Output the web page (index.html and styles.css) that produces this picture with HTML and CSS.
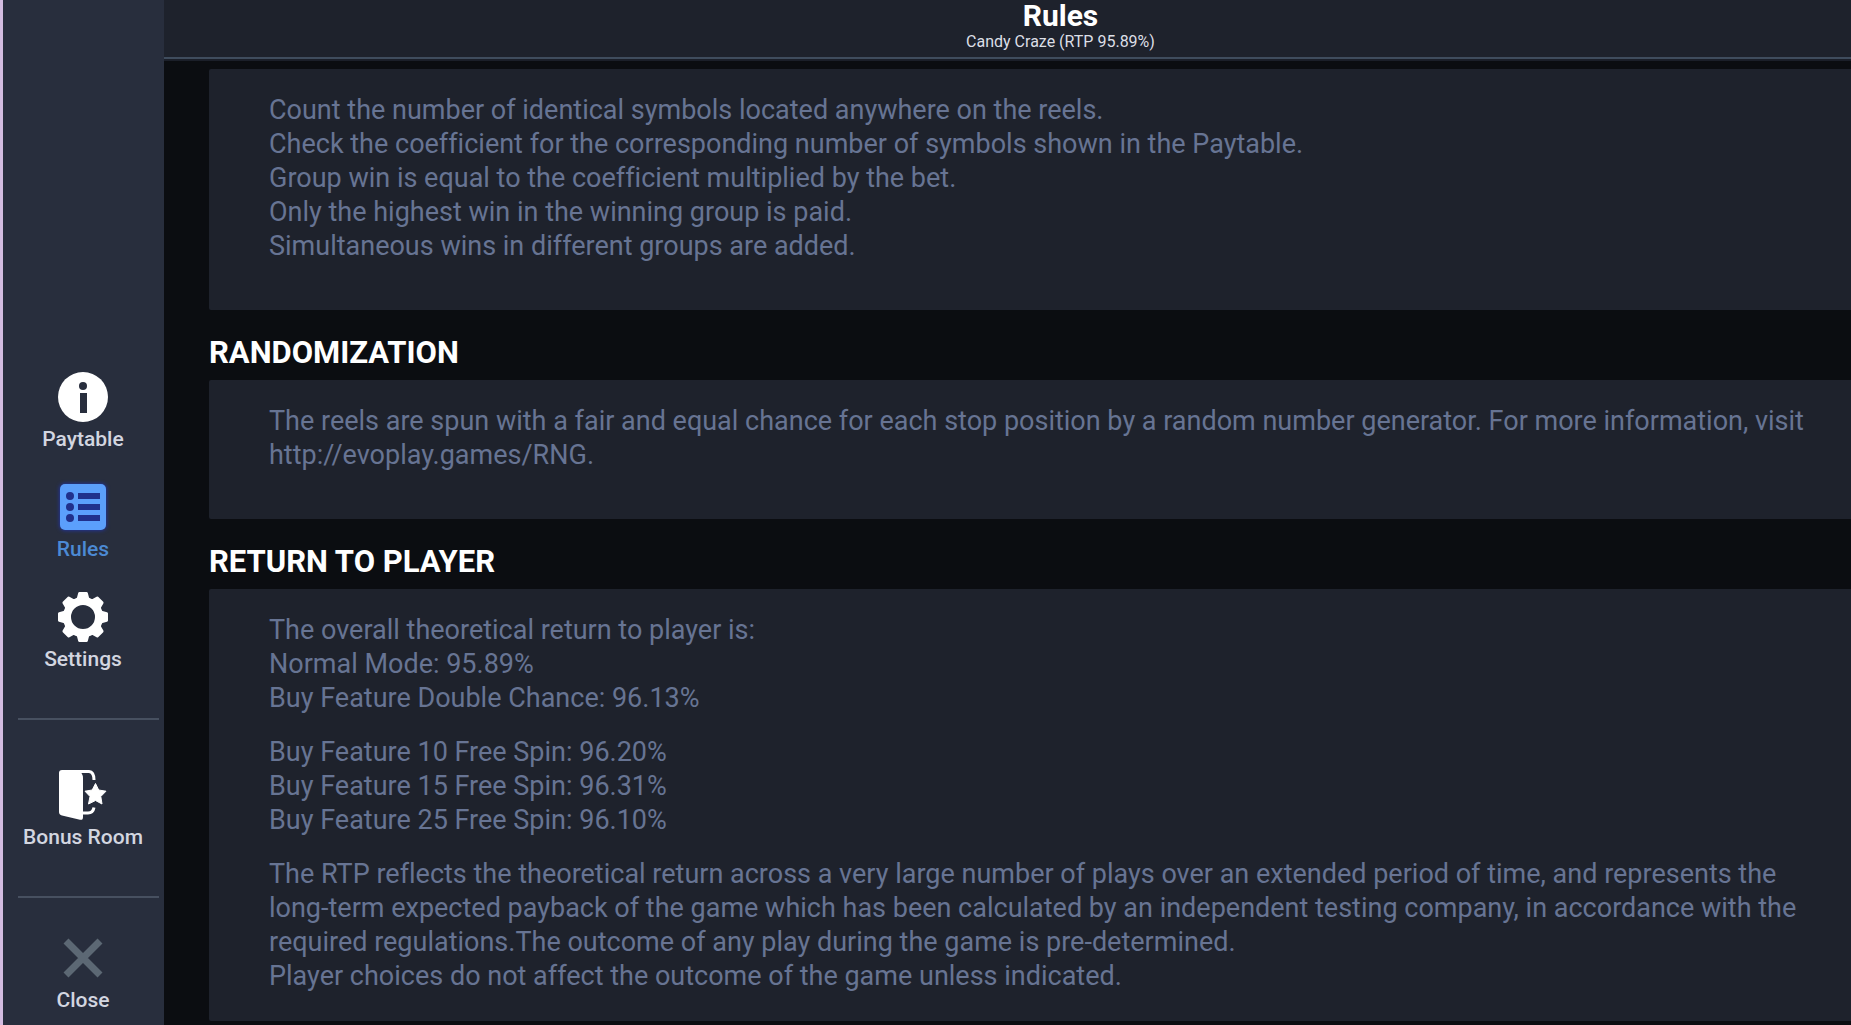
FILE: index.html
```
<!DOCTYPE html>
<html lang="en">
<head>
<meta charset="utf-8">
<meta name="viewport" content="width=device-width, initial-scale=1">
<title>Rules</title>
<link rel="stylesheet" href="styles.css">
</head>
<body>
<div class="app">
  <nav class="sidebar" aria-label="Game menu">
    <div class="menu">
      <button class="menu-item" type="button">
        <svg class="icon" viewBox="0 0 50 50" aria-hidden="true">
          <circle cx="25" cy="25" r="25" fill="#fff"/>
          <circle cx="25" cy="14" r="4" fill="#282e3d"/>
          <path d="M22 21h7v20h-7z" fill="#282e3d"/>
        </svg>
        <span>Paytable</span>
      </button>
      <button class="menu-item active" type="button" aria-current="page">
        <svg class="icon" viewBox="0 0 50 50" aria-hidden="true">
          <rect class="tile" x="2" y="2" width="46" height="46" rx="5" fill="#5b9ffc"/>
          <g fill="#20308c">
            <circle cx="12" cy="14" r="4"/><circle cx="12" cy="25" r="4"/><circle cx="12" cy="36" r="4"/>
            <path d="M20 11h22v6H20zM20 22h22v6H20zM20 33h22v6H20z"/>
          </g>
        </svg>
        <span>Rules</span>
      </button>
      <button class="menu-item" type="button">
        <svg class="icon" viewBox="0 0 50 50" aria-hidden="true">
          <defs><path id="tooth" d="M16.500 9 19 5.500 20.200 1Q20.500 0 21.400 0h7.200Q29.500 0 29.800 1L31 5.500 33.500 9z"/></defs>
          <g fill="#fff">
            <use href="#tooth"/>
            <use href="#tooth" transform="rotate(45 25 25)"/>
            <use href="#tooth" transform="rotate(90 25 25)"/>
            <use href="#tooth" transform="rotate(135 25 25)"/>
            <use href="#tooth" transform="rotate(180 25 25)"/>
            <use href="#tooth" transform="rotate(225 25 25)"/>
            <use href="#tooth" transform="rotate(270 25 25)"/>
            <use href="#tooth" transform="rotate(315 25 25)"/>
          </g>
          <circle cx="25" cy="25" r="16" fill="none" stroke="#fff" stroke-width="8"/>
        </svg>
        <span>Settings</span>
      </button>
    </div>
    <hr class="divider">
    <div class="menu bonus">
      <button class="menu-item" type="button">
        <svg class="icon" viewBox="0 0 50 50" aria-hidden="true">
          <path d="M4 0H20Q25 3 25 8V47Q25 50.500 22 49.700L4 45.500Q1 44.700 1 42V3Q1 0 4 0z" fill="#fff"/>
          <path d="M18 1.500H31Q36 2 36 10M24 43H30Q35 43 36 37.500" fill="none" stroke="#fff" stroke-width="3"/>
          <path d="M37.500 13.500 40.700 20 48 21.200 42.800 26.500 44 34 37.500 30.500 30.500 34 32 26.500 27 21.200 34.200 20z" fill="#fff" stroke="#fff" stroke-linejoin="round"/>
        </svg>
        <span>Bonus Room</span>
      </button>
    </div>
    <hr class="divider">
    <div class="menu close">
      <button class="menu-item" type="button">
        <svg class="icon" viewBox="0 0 50 50" aria-hidden="true">
          <path d="M8 8 42 42M42 8 8 42" stroke="#5c6874" stroke-width="7"/>
        </svg>
        <span>Close</span>
      </button>
    </div>
  </nav>
  <main class="content">
    <header class="header">
      <h1>Rules</h1>
      <p>Candy Craze (RTP 95.89%)</p>
    </header>
    <div class="rules">
      <section class="panel">
        <p>Count the number of identical symbols located anywhere on the reels.<br>
        Check the coefficient for the corresponding number of symbols shown in the Paytable.<br>
        Group win is equal to the coefficient multiplied by the bet.<br>
        Only the highest win in the winning group is paid.<br>
        Simultaneous wins in different groups are added.</p>
      </section>
      <h2>RANDOMIZATION</h2>
      <section class="panel">
        <p>The reels are spun with a fair and equal chance for each stop position by a random number generator. For more information, visit http://evoplay.games/RNG.</p>
      </section>
      <h2>RETURN TO PLAYER</h2>
      <section class="panel rtp">
        <p>The overall theoretical return to player is:<br>
        Normal Mode: 95.89%<br>
        Buy Feature Double Chance: 96.13%</p>
        <p>Buy Feature 10 Free Spin: 96.20%<br>
        Buy Feature 15 Free Spin: 96.31%<br>
        Buy Feature 25 Free Spin: 96.10%</p>
        <p>The RTP reflects the theoretical return across a very large number of plays over an extended period of time, and represents the long-term expected payback of the game which has been calculated by an independent testing company, in accordance with the required regulations.The outcome of any play during the game is pre-determined.<br>
        Player choices do not affect the outcome of the game unless indicated.</p>
      </section>
    </div>
  </main>
</div>
</body>
</html>
```
FILE: styles.css
```
* { box-sizing: border-box; }
body { margin: 0; background: #0b0d11; color: #fff; font-family: Roboto, sans-serif; }
h1, h2, p { margin: 0; }
.app { display: flex; height: 100vh; overflow: hidden; }
.sidebar {
  flex: none;
  display: flex;
  flex-direction: column;
  justify-content: flex-end;
  width: 164px;
  padding: 0 1px 13px 0;
  border-left: 3px solid #d3bce0;
  background: #282e3d;
}
.menu { display: flex; flex-direction: column; gap: 31px; }
.menu-item {
  display: flex;
  flex-direction: column;
  align-items: center;
  gap: 5px;
  padding: 0;
  border: 0;
  background: none;
  color: #d3d6e0;
  font: 500 21px/24px Roboto, sans-serif;
  cursor: pointer;
}
.icon { width: 50px; height: 50px; overflow: visible; }
.active { color: #4c8ad4; }
.tile { filter: drop-shadow(0 0 2px #2036c0); }
.divider { width: 141px; height: 2px; margin: 47px auto 0 15px; border: 0; background: #475060; }
.bonus { margin-top: 50px; }
.close { margin-top: 35px; }
.content { flex: 1; display: flex; flex-direction: column; min-width: 0; }
.header {
  flex: none;
  padding: 0 0 6px 106px;
  border-bottom: 2px solid #3f4c5d;
  background: #1e222c;
  box-shadow: 0 2px #1b1f29;
  text-align: center;
}
.header h1 { font-size: 30px; line-height: 32px; font-weight: 700; }
.header p { color: #dcdfe6; font-size: 16px; line-height: 19px; }
.rules { padding: 10px 0 0 45px; }
.panel {
  padding: 24px 28px 27px 60px;
  border-radius: 2px 0 0 2px;
  background: #1e222c;
  color: #677493;
  font-size: 27px;
  line-height: 34px;
  font-variant-ligatures: none;
}
.panel p { margin-bottom: 20px; }
.rtp p:last-child { margin-bottom: 0; }
.rtp { padding-bottom: 28px; }
.rules h2 { padding: 25px 0 9px; font-size: 31px; line-height: 36px; font-weight: 700; }
```
